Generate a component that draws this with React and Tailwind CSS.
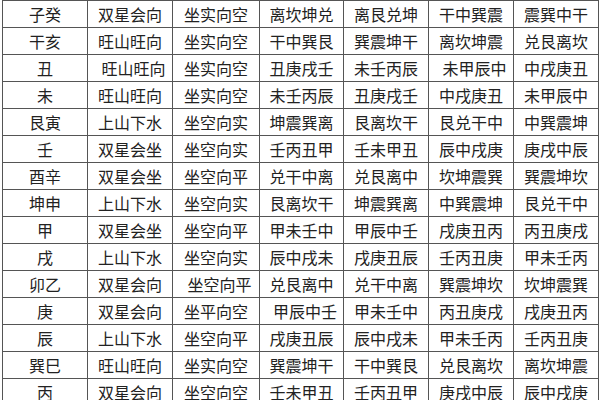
import React from "react";

const rows = [
  ["子癸", "双星会向", "坐实向空", "离坎坤兑", "离艮兑坤", "干中巽震", "震巽中干"],
  ["干亥", "旺山旺向", "坐实向空", "干中巽艮", "巽震坤干", "离坎坤震", "兑艮离坎"],
  ["丑", "旺山旺向", "坐实向空", "丑庚戌壬", "未壬丙辰", "未甲辰中", "中戌庚丑"],
  ["未", "旺山旺向", "坐实向空", "未壬丙辰", "丑庚戌壬", "中戌庚丑", "未甲辰中"],
  ["艮寅", "上山下水", "坐空向实", "坤震巽离", "艮离坎干", "艮兑干中", "中巽震坤"],
  ["壬", "双星会坐", "坐空向实", "壬丙丑甲", "壬未甲丑", "辰中戌庚", "庚戌中辰"],
  ["酉辛", "双星会坐", "坐空向平", "兑干中离", "兑艮离中", "坎坤震巽", "巽震坤坎"],
  ["坤申", "上山下水", "坐空向实", "艮离坎干", "坤震巽离", "中巽震坤", "艮兑干中"],
  ["甲", "双星会坐", "坐空向平", "甲未壬中", "甲辰中壬", "戌庚丑丙", "丙丑庚戌"],
  ["戌", "上山下水", "坐空向实", "辰中戌未", "戌庚丑辰", "壬丙丑庚", "甲未壬丙"],
  ["卯乙", "双星会向", "坐空向平", "兑艮离中", "兑干中离", "巽震坤坎", "坎坤震巽"],
  ["庚", "双星会向", "坐平向空", "甲辰中壬", "甲未壬中", "丙丑庚戌", "戌庚丑丙"],
  ["辰", "上山下水", "坐空向平", "戌庚丑辰", "辰中戌未", "甲未壬丙", "壬丙丑庚"],
  ["巽巳", "旺山旺向", "坐实向空", "巽震坤干", "干中巽艮", "兑艮离坎", "离坎坤震"],
  ["丙", "双星会向", "坐空向空", "壬未甲丑", "壬丙丑甲", "庚戌中辰", "辰中戌庚"],
];

const widths = ["w-[85px]", "w-[85px]", "w-[87px]", "w-[84px]", "w-[85px]", "w-[85px]", "w-[85px]"];

const shifted = new Set(["2-1", "2-5", "10-2", "11-3"]);

export default function App() {
  return (
    <div className="w-[600px] h-[400px] overflow-hidden bg-white">
      <table
        className="ml-[2px] border-collapse table-fixed text-[16px] leading-none text-[#222]"
        style={{ fontFamily: '"Noto Sans CJK SC", "Noto Sans", sans-serif' }}
      >
        <colgroup>
          {widths.map((w, i) => (
            <col key={i} className={w} />
          ))}
        </colgroup>
        <tbody>
          {rows.map((r, ri) => (
            <tr key={ri} className="h-[27px]">
              {r.map((c, ci) => (
                <td
                  key={ci}
                  className={
                    "border border-[#555] text-center align-middle p-0 whitespace-nowrap " +
                    (shifted.has(ri + "-" + ci) ? "pl-[7px]" : "")
                  }
                >
                  {c}
                </td>
              ))}
            </tr>
          ))}
        </tbody>
      </table>
    </div>
  );
}
